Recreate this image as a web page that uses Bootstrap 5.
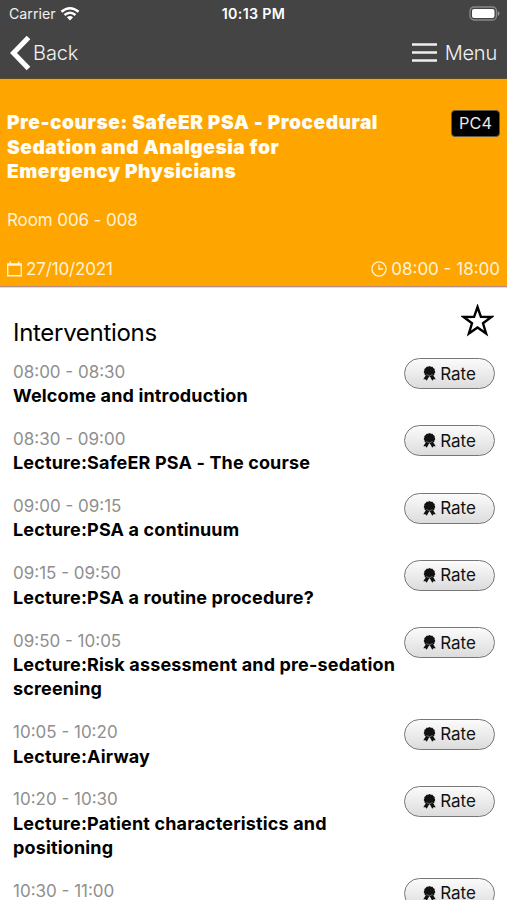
<!DOCTYPE html>
<html lang="en">
<head>
<meta charset="utf-8">
<meta name="viewport" content="width=device-width, initial-scale=1">
<title>Interventions</title>
<link href="https://cdn.jsdelivr.net/npm/bootstrap@5.3.0/dist/css/bootstrap.min.css" rel="stylesheet">
<style>
body{font-family:Inter,"Liberation Sans",sans-serif;font-size:17px;line-height:24.45px;color:#000;height:900px;overflow:hidden;background:#fff}
svg{display:block;flex:none}
.topbar{background:#444;color:#f1f1f1;height:79px;border-bottom:1px solid #5c4a25}
.status{height:27px;font-size:14.2px;line-height:27px;padding:0 7px 0 9px}
.status .clock{font-weight:600;color:#fff;font-size:14.2px;letter-spacing:.35px}
.navline{height:51px;padding:0 10px;font-size:20px;font-weight:300;line-height:51px}
.navline .backtext{margin-left:2px;letter-spacing:-.1px;padding-top:1px}
.navline .menu{letter-spacing:-.2px;padding-top:1px}
.session{background:#ffa500;color:#fff3d8;height:208px;padding:31px 7px 6px 7px;border-bottom:1px solid #b58d80;box-shadow:0 1px 0 #e4d5f0}
.session h1{font-size:19.2px;font-weight:900;line-height:24.45px;color:#fffdf5;width:385px;margin:.4px 0 .6px;letter-spacing:.5px}
.code{background:#000;color:#e8e8e8;border:1px solid #625b4a;border-radius:4px;height:27px;width:49px;line-height:25px;font-size:16.3px;text-align:center}
.room{margin-top:24px;letter-spacing:-.1px}
.meta{margin-top:24px;letter-spacing:-.15px}
.meta .hours{letter-spacing:0}
.heading{height:71px;padding:0 13px}
.heading h2{font-size:24px;font-weight:400;line-height:30px;margin:31px 0 0;letter-spacing:-.3px}
.slots{padding:0 12px 0 13px}
.slot{margin-bottom:16.85px}
.slot .time{color:#8f8f8f;padding-top:1.5px}
.slot .title{font-weight:650;width:386px;font-size:18px;letter-spacing:.15px;white-space:nowrap}
.rate{width:91px;height:31px;border:1.5px solid #777;border-radius:16px;background:linear-gradient(#fbfbfb,#dcdcdc);font-size:17px;line-height:28px;color:#111;padding:0;flex:none}
</style>
<script src="https://cdn.jsdelivr.net/npm/bootstrap@5.3.0/dist/js/bootstrap.bundle.min.js"></script>
</head>
<body>
<svg class="d-none"><symbol id="rosette" viewBox="0 0 14 16"><path d="M7 0l1.500.8 1.700-.1.9 1.500 1.500.9-.1 1.700.8 1.500-.9 1.400-.2 1.700-1.600.8L7 10.900l-3.600-.7-1.600-.8-.2-1.700L.7 6.300l.8-1.500-.1-1.700 1.500-.9.900-1.500 1.700.1z" fill="#111"/><path d="M3.200 9.500L.3 14.300l2.400-.2 1.300 1.800L6.700 11h.6L10 15.900l1.300-1.800 2.400.2-2.900-4.800z" fill="#111"/><path d="M3.600 9.100Q7 11.700 10.400 9.100" fill="none" stroke="#aaa" stroke-width=".6"/></symbol></svg>

<header class="topbar">
  <div class="status d-flex justify-content-between position-relative">
    <div class="d-flex align-items-center"><span class="carrier">Carrier</span>
      <svg class="ms-1" width="20" height="14" viewBox="0 0 20 14" fill="none" stroke="#fff" stroke-width="2.500"><path d="M1.400 4.800Q10-2.200 18.600 4.800M4.500 8Q10 3.500 15.500 8"/><path d="M10 13.500L6.900 10.300Q10 7.900 13.100 10.300z" fill="#fff" stroke="none"/></svg>
    </div>
    <span class="clock position-absolute start-50 translate-middle-x">10:13 PM</span>
    <svg class="align-self-center" width="31" height="15" viewBox="0 0 31 15"><rect x="1" y="1" width="26.500" height="13" rx="4" fill="none" stroke="#888" stroke-width="1.300"/><rect x="3" y="3" width="22.500" height="9" rx="2" fill="#fff"/><path d="M28.800 5v5Q30.500 9 30.500 7.500T28.800 5" fill="#999"/></svg>
  </div>
  <nav class="navline d-flex justify-content-between">
    <div class="d-flex align-items-center"><svg width="21" height="36" viewBox="0 0 21 36"><path d="M18.500 2.500L3.500 18l15 15.500" fill="none" stroke="#fff" stroke-width="5"/></svg><span class="backtext">Back</span></div>
    <div class="d-flex align-items-center gap-2"><svg width="25" height="19" viewBox="0 0 25 19"><path d="M0 1.500h25M0 9.500h25M0 17.500h25" stroke="#eee" stroke-width="2.600"/></svg><span class="menu">Menu</span></div>
  </nav>
</header>

<section class="session">
  <div class="d-flex justify-content-between align-items-start"><h1>Pre-course: SafeER PSA - Procedural<br>Sedation and Analgesia for<br>Emergency Physicians</h1><div class="code">PC4</div></div>
  <div class="room">Room 006 - 008</div>
  <div class="meta d-flex justify-content-between">
    <div class="d-flex align-items-center gap-1"><svg width="15" height="16" viewBox="0 0 16 16" fill="none" stroke="#fff3d8"><path d="M.8 2.500h14.400v12.700H.8z" stroke-width="1.400"/><path d="M1 3.500h14" stroke-width="2"/><path d="M3.500 0v3M12.500 0v3" stroke-width="1.500"/></svg><span>27/10/2021</span></div>
    <div class="d-flex align-items-center gap-1"><svg width="16" height="16" viewBox="0 0 16 16" fill="none" stroke="#fff3d8" stroke-width="1.300"><circle cx="8" cy="8" r="7.100"/><path d="M8 3.500V8h4"/></svg><span class="hours">08:00 - 18:00</span></div>
  </div>
</section>

<main>
  <div class="heading d-flex justify-content-between align-items-start"><h2>Interventions</h2>
    <svg style="margin-top:17px" width="33" height="33" viewBox="0 0 33 33"><path d="M16.500 3l3.400 9.800 10.500.2-8.400 6.300 3.100 10.200-8.600-6-8.600 6L11 19.300 2.600 13l10.500-.2z" fill="none" stroke="#000" stroke-width="2.400"/></svg>
  </div>
  <div class="slots">
    <div class="slot d-flex justify-content-between align-items-start"><div><div class="time">08:00 - 08:30</div><div class="title">Welcome and introduction</div></div><button class="rate d-flex align-items-center justify-content-center gap-1"><svg width="13" height="15"><use href="#rosette"/></svg>Rate</button></div>
    <div class="slot d-flex justify-content-between align-items-start"><div><div class="time">08:30 - 09:00</div><div class="title">Lecture:SafeER PSA - The course</div></div><button class="rate d-flex align-items-center justify-content-center gap-1"><svg width="13" height="15"><use href="#rosette"/></svg>Rate</button></div>
    <div class="slot d-flex justify-content-between align-items-start"><div><div class="time">09:00 - 09:15</div><div class="title">Lecture:PSA a continuum</div></div><button class="rate d-flex align-items-center justify-content-center gap-1"><svg width="13" height="15"><use href="#rosette"/></svg>Rate</button></div>
    <div class="slot d-flex justify-content-between align-items-start"><div><div class="time">09:15 - 09:50</div><div class="title">Lecture:PSA a routine procedure?</div></div><button class="rate d-flex align-items-center justify-content-center gap-1"><svg width="13" height="15"><use href="#rosette"/></svg>Rate</button></div>
    <div class="slot d-flex justify-content-between align-items-start"><div><div class="time">09:50 - 10:05</div><div class="title">Lecture:Risk assessment and pre-sedation<br>screening</div></div><button class="rate d-flex align-items-center justify-content-center gap-1"><svg width="13" height="15"><use href="#rosette"/></svg>Rate</button></div>
    <div class="slot d-flex justify-content-between align-items-start"><div><div class="time">10:05 - 10:20</div><div class="title">Lecture:Airway</div></div><button class="rate d-flex align-items-center justify-content-center gap-1"><svg width="13" height="15"><use href="#rosette"/></svg>Rate</button></div>
    <div class="slot d-flex justify-content-between align-items-start"><div><div class="time">10:20 - 10:30</div><div class="title">Lecture:Patient characteristics and<br>positioning</div></div><button class="rate d-flex align-items-center justify-content-center gap-1"><svg width="13" height="15"><use href="#rosette"/></svg>Rate</button></div>
    <div class="slot d-flex justify-content-between align-items-start"><div><div class="time">10:30 - 11:00</div></div><button class="rate d-flex align-items-center justify-content-center gap-1"><svg width="13" height="15"><use href="#rosette"/></svg>Rate</button></div>
  </div>
</main>
</body>
</html>
